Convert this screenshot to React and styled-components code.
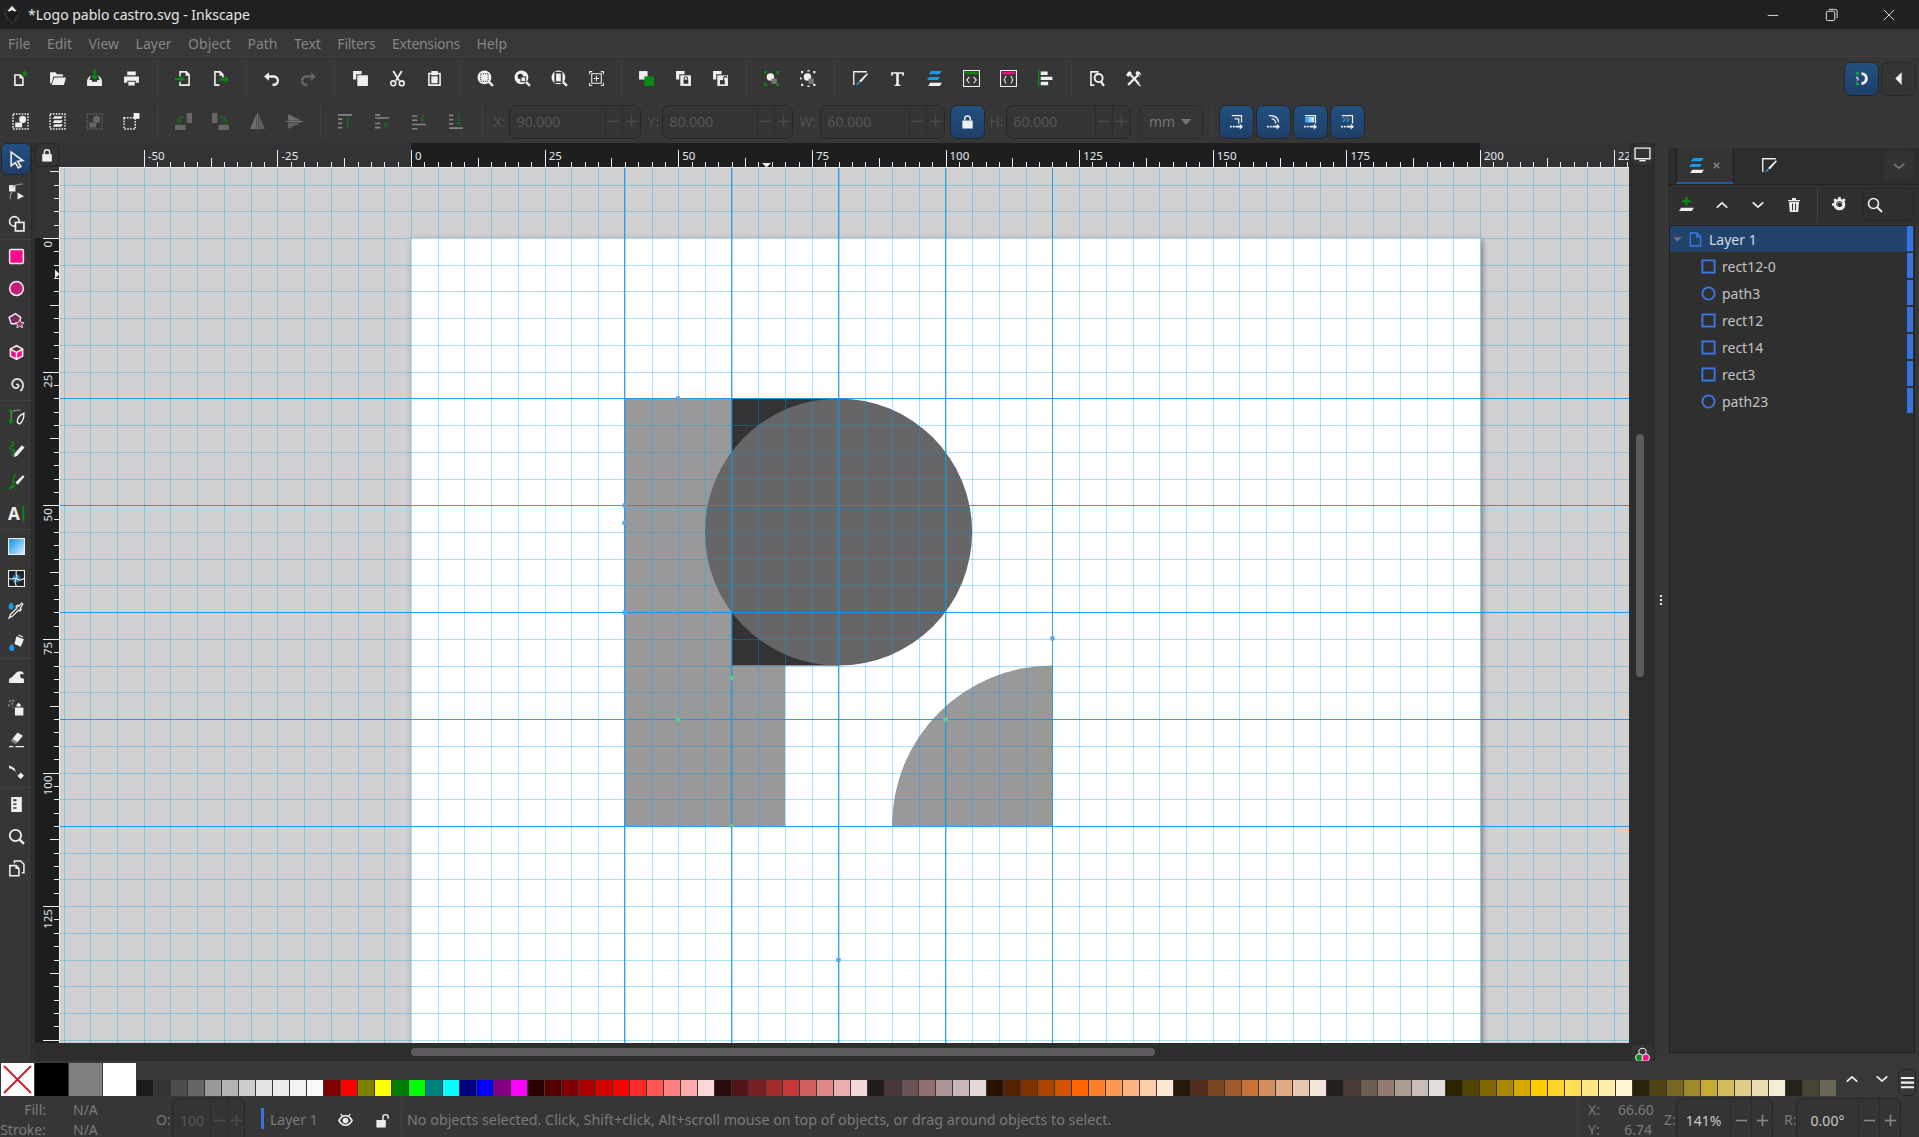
import React from "react";
import styled, { createGlobalStyle } from "styled-components";

const W = "#efefef", G = "#0a8a12", B = "#1a9be8", P = "#ff0a8c", D = "#333";

const Global = createGlobalStyle`
  html, body { margin: 0; padding: 0; background: #353535; overflow: hidden; }
  * { box-sizing: border-box; }
  #root { font-family: "Noto Sans", "Open Sans", sans-serif; }
`;

const Shell = styled.div`
  width: 1919px; height: 1137px; display: flex; flex-direction: column; overflow: hidden;
  background: #363636; color: #888; font-size: 14px;
`;
const TitleBar = styled.header`
  height: 29px; background: #202020; display: flex; align-items: center; padding: 0 1px 0 3px; color: #e6e6e6;
`;
const TitleText = styled.span`
  margin-left: 7px; font-size: 14px; white-space: nowrap; flex: 1;
`;
const WinBtn = styled.div`
  width: 58px; height: 29px; display: flex; align-items: center; justify-content: center;
`;
const MenuBar = styled.nav`
  height: 28px; background: #383838; display: flex; align-items: center; padding: 2px 0 0 8px; gap: 16.5px;
  border-bottom: 1px solid #3e3e3e;
`;
const MenuItem = styled.span`
  font-size: 14px; color: #868686; line-height: 20px; letter-spacing: ${p => p.$ls || 0}px;
`;
const ToolRow = styled.div`
  height: 43px; background: #363636; display: flex; align-items: center; padding-left: 2px;
`;
const IconBtn = styled.div`
  width: 37px; height: 34px; flex: none; display: flex; align-items: center; justify-content: center;
  opacity: ${p => p.$dim ? 0.42 : 1};
`;
const Sep = styled.div`
  width: ${p => p.$w || 14.5}px; height: 34px; flex: none; position: relative;
  &::after { content: ""; position: absolute; left: 50%; top: 0; bottom: 0; width: 1px; background: #3f3f3f; }
`;
const Label = styled.span`
  width: ${p => p.$w}px; margin-left: ${p => p.$ml || 0}px; flex: none; font-size: 14px; color: ${p => p.$c || "#505050"};
`;
const Spin = styled.div`
  width: ${p => p.$w}px; height: ${p => p.$h || 34}px; flex: none; display: flex; align-items: center;
  border: 1px solid #272727; border-radius: 7px; background: #343434; color: ${p => p.$c || "#565656"};
  font-size: 14px; margin-top: ${p => p.$mt || 0}px; overflow: hidden;
`;
const SpinValue = styled.span`
  flex: 1; padding-left: ${p => p.$pl ?? 7}px; text-align: ${p => p.$center ? "center" : "left"}; white-space: nowrap;
`;
const Step = styled.div`
  width: ${p => p.$w || 17.5}px; height: 100%; flex: none; border-left: 1px solid #2c2c2c;
  display: flex; align-items: center; justify-content: center; color: ${p => p.$c || "#4b4b4b"};
`;
const LockBtn = styled.div`
  width: ${p => p.$w || 35}px; height: 34px; margin-left: ${p => p.$ml || 0}px; flex: none; border-radius: 7px;
  border: 1px solid #272727; display: flex; align-items: center; justify-content: center;
  background: ${p => p.$on ? "linear-gradient(#22507f, #1e3f69)" : "#343434"};
`;
const UnitSel = styled.div`
  width: 64px; height: 34px; margin-left: 8px; flex: none; border: 1px solid #2b2b2b; border-radius: 7px;
  display: flex; align-items: center; justify-content: center; gap: 5px; color: #737373; font-size: 14px;
`;
const Group = styled.div`
  display: flex; gap: ${p => p.$gap || 2}px; margin-left: ${p => p.$ml || "0"}; padding-right: ${p => p.$pr || 0}px; flex: none;
`;
const Middle = styled.div`
  height: 918px; display: flex;
`;
const Toolbox = styled.aside`
  width: 35px; flex: none; background: #363636; border-right: 3px solid #303030;
  display: flex; flex-direction: column; box-shadow: inset -1px 0 0 #2a2a2a;
`;
const ToolBtn = styled.div`
  width: 32px; height: 32px; flex: none; display: flex; align-items: center; justify-content: center;
  margin-left: ${p => p.$active ? 1 : 0}px;
  ${p => p.$active && "width: 30px; border-radius: 6px; border: 1px solid #272727; background: linear-gradient(#22507f, #1e3f69);"}
`;
const ToolSep = styled.div`
  height: 1px; width: 32px; flex: none; background: #3f3f3f;
`;
const Workspace = styled.main`
  width: 1620px; flex: none; display: grid; grid-template-columns: 24px 1570px 26px; grid-template-rows: 24px 876px 18px;
  background: #2d2d2d;
`;
const Corner = styled.div`
  background: #333; border: 1px solid #272727; border-radius: 6px; display: flex; align-items: center; justify-content: center;
  width: 24px; height: 24px;
`;
const HRuler = styled.svg`
  display: block; width: 1570px; height: 24px;
`;
const VRuler = styled.svg`
  display: block; width: 24px; height: 876px;
`;
const CornerBtn = styled.div`
  width: 25px; height: 23px; margin-left: 1px; border: 1px solid #272727; border-radius: 7px; background: #333;
  display: flex; align-items: center; justify-content: center;
  grid-column: ${p => p.$col || "auto"};
`;
const CanvasWrap = styled.div`
  position: relative; width: 1570px; height: 876px; overflow: hidden; background: #d1d1d1;
  border-left: 1px solid #f2f2f2; border-top: 1px solid #e8e8e8;
`;
const Drawing = styled.svg`
  position: absolute; left: -1px; top: -1px; width: 1570px; height: 876px;
`;
const VScrollCol = styled.div`
  background: #2c2c2c; display: flex; justify-content: center; padding: 267px 0 0 0;
`;
const VThumb = styled.div`
  width: 8px; height: 243px; background: #5c5c5c; border-radius: 4px; margin-right: 4px;
`;
const HScrollRow = styled.div`
  grid-column: 1 / 3; background: #2d2d2d; padding: 5px 0 0 376px;
`;
const HThumb = styled.div`
  width: 744px; height: 8px; background: #5d5d5d; border-radius: 4px;
`;
const Handle = styled.div`
  width: 13px; flex: none; background: #373737; display: flex; flex-direction: column; gap: 2px; align-items: center; justify-content: center;
  padding-bottom: 5px; padding-right: 1px;
`;
const HandleDot = styled.i`
  width: 2px; height: 2px; background: #e8e8e8; display: block;
`;
const Panel = styled.section`
  width: 251px; flex: none; background: #373737; padding-top: 5px; display: flex; flex-direction: column;
`;
const TabBar = styled.div`
  height: 37px; background: #2d2d2d; display: flex; align-items: stretch; padding-left: 8px; border-bottom: 1px solid #222; position: relative;
`;
const Tab = styled.div`
  width: ${p => p.$w}px; display: flex; align-items: center; justify-content: ${p => p.$active ? "flex-start" : "center"}; gap: 7px;
  padding-left: ${p => p.$active ? 11 : 0}px;
  border-left: 1px solid ${p => p.$active ? "#1e1e1e" : "transparent"}; border-right: 1px solid ${p => p.$active ? "#1e1e1e" : "transparent"};
  border-bottom: 2px solid ${p => p.$active ? "#1c5aa3" : "transparent"};
  background: ${p => p.$active ? "#333" : "transparent"};
`;
const TabMenu = styled.div`
  margin-left: auto; margin-right: 5px; width: 30px; height: 30px; align-self: center; border-radius: 5px; background: #323232;
  display: flex; align-items: center; justify-content: center;
`;
const PanelTools = styled.div`
  height: 39px; background: #2f2f2f; display: flex; align-items: center;
`;
const PanelBtn = styled.div`
  width: 36px; height: 32px; flex: none; display: flex; align-items: center; justify-content: center;
`;
const SearchBox = styled.div`
  width: 52px; height: 33px; margin-left: 5px; flex: none; border: 1px solid #242424; border-radius: 7px; padding-left: 4px;
  display: flex; align-items: center;
`;
const LayerList = styled.div`
  flex: 1; margin: 1px 4px 8px 1px; background: #2f2f2f; border: 1px solid #1f1f1f; display: flex; flex-direction: column; gap: 1px;
`;
const LayerRow = styled.div`
  height: 26px; flex: none; display: flex; align-items: center; position: relative; padding-left: ${p => p.$top ? 3 : 31}px;
  background: ${p => p.$top ? "#20426b" : "transparent"}; color: ${p => p.$top ? "#d3dbe5" : "#c4c4c4"}; font-size: 14px;
`;
const RowText = styled.span`
  margin-left: ${p => p.$ml}px;
`;
const Spacer = styled.span`
  width: ${p => p.$w}px; flex: none;
`;
const RowMark = styled.i`
  position: absolute; right: 1px; top: 0; bottom: 1px; width: 6px; background: #3574e0; display: block;
`;
const Palette = styled.div`
  height: 35px; background: #383838; display: flex; align-items: flex-end; padding-left: 1px;
`;
const BigSwatch = styled.div`
  width: 33px; height: 33px; margin-right: 1px; flex: none; background: ${p => p.$c};
`;
const Swatch = styled.div`
  width: 16px; height: 16px; margin-right: 1px; flex: none; background: ${p => p.$c};
`;
const NavBtn = styled.div`
  width: 30px; height: 24px; flex: none; align-self: flex-start; margin-top: 6px; display: flex; align-items: center; justify-content: center;
`;
const MenuSquare = styled.div`
  width: 18px; height: 27px; margin-left: 1px; flex: none; border: 1px solid #262626; border-radius: 6px; display: flex; align-items: center; justify-content: center;
`;
const Status = styled.footer`
  height: 41px; background: #363636; display: flex; align-items: flex-start; overflow: hidden; color: #7b7b7b; font-size: 14px;
`;
const FillBlock = styled.div`
  width: 156px; flex: none; display: grid; grid-template-columns: 46px 54px; column-gap: 27px; line-height: 20px; padding-top: 4px;
  & > :nth-child(odd) { text-align: right; }
`;
const LayerMark = styled.i`
  width: 3px; height: 21px; margin: 12px 0 0 16px; background: #3574e0; flex: none; display: block;
`;
const StatusText = styled.span`
  margin-left: ${p => p.$ml || 0}px; line-height: 20px; margin-top: 14px; white-space: nowrap; flex: none;
  font-size: ${p => p.$fs || 14}px;
  width: ${p => p.$w ? p.$w + "px" : "auto"};
`;
const StatusIcon = styled.div`
  width: ${p => p.$w || 38}px; height: 20px; margin-top: 14px; flex: none; display: flex; align-items: center; justify-content: center;
`;
const VBar = styled.div`
  width: 1px; height: 41px; background: #3f3f3f; flex: none;
`;
const Coords = styled.div`
  width: 75px; flex: none; display: grid; grid-template-columns: 30px 34px; padding: 4px 0 0 10px; line-height: 20px;
  & > :nth-child(even) { text-align: right; }
`;
const TitleLogo = styled.svg`
  width: 18px; height: 19px; flex: none;
`;
const Ico = styled.svg.attrs({ viewBox: "0 0 16 16" })`
  width: ${p => p.$s || 17}px; height: ${p => p.$s || 17}px; display: block; flex: none; fill: ${W}; overflow: visible;
`;

const mag = (inner) => (<><circle cx="7" cy="7" r="6.5" /><path d="M11 11l4 4" stroke={W} strokeWidth="2.2" />{inner}</>);
const box = (x, y, w, h, c = W, sw = 1) => <rect x={x} y={y} width={w} height={h} fill="none" stroke={c} strokeWidth={sw} />;
const dotted = (x, y, w, h, c = W) => <rect x={x} y={y} width={w} height={h} fill="none" stroke={c} strokeWidth="1.4" strokeDasharray="1.5 1.2" />;
const arrowDash = <path d="M1 12.500h2v2H1zM4 12.500h2v2H4zM7 12.500h4.500V10.500l3.500 3-3.500 3v-2H7z" />;

const icons = {
  new: <><path fillRule="evenodd" d="M2 4h6l3 3v8H2zM3.500 5.500v8h6V8H7V5.500z" /><path fill={G} d="M12 0l1 2 2.200.3-1.600 1.500.4 2.200-2-1-2 1 .4-2.200L8.800 2.300 11 2z" /></>,
  open: <><path d="M1 2h5l1.500 2H13v2H4.200L2.600 12 1 13z" /><path d="M5 7h11l-2 7H2.500z" /></>,
  save: <><path fill={G} d="M7 0h2v5h3L8 9.500 4 5h3z" /><path fillRule="evenodd" d="M1 9.500L3 6h1.500L3 9.500h2.500V11h5V9.500H13L11.500 6H13l2 3.500V15H1z" /></>,
  print: <path d="M4 1.500h8V5H4zM1 6h14v6h-3v-2H4v2H1zM5 11h6v3.500H5z" />,
  imp: <><path fillRule="evenodd" d="M4 1h7l3 3v11H4v-4h1.500v2.500h7V5.500H10v-3H5.500V6H4z" /><path fill={G} d="M0 7.500h5V5l4 3.500L5 12V9.500H0z" /></>,
  exp: <><path fillRule="evenodd" d="M2 1h6l3 3v3H9.500V5.500H7v-3H3.500v11H7V15H2z" /><path fill={G} d="M7 8h5V5.500l4 3.500-4 3.500V10H7z" /></>,
  undo: <path d="M5.500 2L1 6l4.500 4V7.200H10c1.800 0 3 1.200 3 2.800s-1.200 2.800-3 2.800H9V15h1c3 0 5-2.200 5-5s-2-5-5-5H5.500z" />,
  redo: <path fill="#656565" d="M10.500 2L15 6l-4.500 4V7.200H6c-1.800 0-3 1.200-3 2.800s1.200 2.800 3 2.800h1V15H6c-3 0-5-2.200-5-5s2-5 5-5h4.500z" />,
  copy: <path d="M1 1h8v3H4v5H1zM5 5h10v10H5z" />,
  cut: <><path d="M4 1l5.500 9M12 1L6.500 10" stroke={W} strokeWidth="1.800" /><circle cx="4" cy="12.500" r="2.300" fill="none" stroke={W} strokeWidth="1.500" /><circle cx="12" cy="12.500" r="2.300" fill="none" stroke={W} strokeWidth="1.500" /></>,
  paste: <><path fillRule="evenodd" d="M5 1h6v1.500h3V15H2V2.500h3zM3.500 4v9.500h9V4H11v1H5V4z" /><path d="M5 6h6v6.500H5z" /></>,
  zoomSel: mag(<rect x="3.500" y="3.500" width="7" height="7" fill="none" stroke={D} strokeDasharray="1 1" />),
  zoomDraw: mag(<><circle cx="6" cy="6" r="2.500" fill={D} /><rect x="6.500" y="6.500" width="4.500" height="4.500" fill={W} stroke={D} /></>),
  zoomPage: mag(<rect x="4" y="2.500" width="6" height="9" fill="none" stroke={D} strokeWidth="1.500" />),
  zoomCenter: <><path d="M1 1h3v1H2v2H1zM12 1h3v3h-1V2h-2zM1 12h1v2h2v1H1zM14 12h1v3h-3v-1h2z" /><path d="M3.500 3.500h9v9h-9z" fill="none" stroke={W} /><path d="M7.500 5.500h1v2h2v1h-2v2h-1v-2h-2v-1h2z" /></>,
  dup: <><path d="M1 1h8v8H1z" /><path fill={G} d="M6 6h9v9H6z" /></>,
  clone: <><path d="M1 1h8v3H4v5H1z" /><path d="M5 5h10v10H5z" /><path fill={D} d="M8 9h4.500v4H8z" /><path d="M8.700 9V7.800a1.500 1.500 0 0 1 3 0V9" fill="none" stroke={D} /></>,
  unclone: <><path d="M1 1h8v3H4v5H1z" /><path d="M5 5h10v10H5z" /><path fill={D} d="M7.500 9.500H12V13.500H7.500z" /><path d="M11 9.500V7.500a1.500 1.500 0 0 1 3 0" fill="none" stroke={D} /></>,
  group: <><circle cx="7" cy="6.500" r="3.500" /><path d="M8 8h5v5H8z" fill="#777" /><path fill={G} d="M1 1h2.500v2.500H1zM12.500 1H15v2.500h-2.500zM1 12.500h2.500V15H1zM12.500 12.500H15V15h-2.500z" /></>,
  ungroup: <><circle cx="7" cy="6.500" r="3.500" /><path d="M8 8h5v5H8z" fill="#777" /><path d="M1 1h2v2H1zM12.500 1h2v2h-2zM1 13h2v2H1zM12.500 13h2v2h-2zM7 0h2v1.500H7zM7 14.500h2V16H7zM0 7h1.500v2H0z" /></>,
  fillStroke: <><path d="M1 1h13v1.300H2.300V14H1z" /><path d="M3.500 15l2-4 2 1.500z" fill={B} /><path d="M6.500 10.500L14 3l1 1-6.500 7.500z" /></>,
  text: <path d="M2 2h12v3.500h-1.200L12 3.500H9.200v10l1.500.6v.9H5.300v-.9l1.500-.6v-10H4l-.8 2H2z" />,
  layers: <><path fill={B} d="M5 1h10l-2.500 3H2.500zM3 6.500h10L11 9.500H1z" /><path d="M4 12h11l-2 3H2z" /></>,
  xml: <>{box(.5, .5, 15, 15)}<path fill={G} d="M2 2h12v2H2z" /><path d="M6 6.500L3.500 9.500 6 12.500M10 6.500l2.500 3-2.500 3" fill="none" stroke={W} /></>,
  css: <>{box(.5, .5, 15, 15)}<path fill={P} d="M2 2h12v2H2z" /><path d="M6 6c-1.500 0-1 2.800-2 3.300 1 .5.500 3.200 2 3.200M10 6c1.500 0 1 2.800 2 3.300-1 .5-.5 3.200-2 3.200" fill="none" stroke={W} /></>,
  align: <><path fill={G} d="M1 0h1.200v16H1z" /><path d="M3.500 1.500H10v3.200H3.500zM3.500 6.300h11v3.200h-11zM3.500 11.100h7v3.200h-7z" /></>,
  docProps: <><path fillRule="evenodd" d="M2 1h8v1.500H3.500v11H6V15H2z" /><circle cx="10" cy="7.500" r="3.800" fill="none" stroke={W} strokeWidth="1.800" /><path d="M12 10.500l3 4.500" stroke={W} strokeWidth="2.200" /><path d="M6.500 3.500h3V5h-3z" /></>,
  prefs: <><path d="M3 14L13 4" stroke={W} strokeWidth="2" /><path d="M3 2l10 11" stroke={W} strokeWidth="2" /><path d="M1 4.500L4.500 1l2 2L3 6.500zM11 1.200a3.500 3.500 0 0 1 4 4L13.500 3.500 12.500 4.500l1.600 1.600a3.500 3.500 0 0 1-4-4zM11.500 11l3.500 3.500-1 1L10.500 12z" /></>,
  selAll: <>{dotted(1, 1, 14, 14)}<circle cx="10" cy="6" r="3.300" /><path d="M3 9h6.500v4.500H3z" /></>,
  selLayers: <>{dotted(1, 1, 14, 14)}<path d="M5 3h8l-1.500 2.500h-8zM5 6.800h8l-1.500 2.500h-8zM5 10.600h8L11.500 13h-8z" /></>,
  desel: <>{dotted(1, 1, 14, 14, "#999")}<circle cx="10" cy="6" r="3.300" fill="#aaa" /><path d="M3 9h6.500v4.500H3z" fill="#aaa" /></>,
  handle: <>{dotted(1, 4.500, 10.500, 10.500)}<path d="M10 0h5.500v5.500H10z" /></>,
  rotCcw: <><path fill="#aaa" d="M11 0h5v9.500h-5zM0 11h10v5H0z" /><path fill={G} d="M9 2.500C5 2 3 4 2.500 6.500H0l3.500 3.500 3.500-3.500H4.800c.3-1 2-1.800 4.200-1.500z" /></>,
  rotCw: <><path fill="#aaa" d="M0 0h5v9.500H0zM6 11h10v5H6z" /><path fill={G} d="M7 2.500c4-.5 6 1.500 6.500 4H16L12.500 10 9 6.500h2.200c-.3-1-2-1.800-4.200-1.500z" /></>,
  flipH: <><path d="M7 1v14H1z" fill="#bbb" /><path d="M9 1v14h6z" fill="#999" /><path d="M7.700 0h.8v16h-.8z" /></>,
  flipV: <><path d="M2 1l12 6H2z" fill="#bbb" /><path d="M2 15l12-6H2z" fill="#999" /><path d="M0 7.700h16v.8H0z" /></>,
  top: <><path d="M1 1h13v1.500H1zM1 5h4v1.500H1zM1 9h4v1.500H1zM1 13h4v1.500H1z" /><path fill={G} d="M9 15V7H7l3-3.500L13 7h-2v8z" /></>,
  up: <><path d="M1 4h13v1.500H1zM1 1h5v1.500H1zM1 9h5v1.500H1zM1 13h5v1.500H1z" /><path fill={G} d="M10 15V11H8l3-3.500 3 3.500h-2v4z" /></>,
  down: <><path d="M1 10h13v1.500H1zM1 2h5v1.500H1zM1 6h5v1.500H1zM1 14h5v1.500H1z" /><path fill={G} d="M10 1v4H8l3 3.500L14 5h-2V1z" /></>,
  bottom: <><path d="M1 13.500h13V15H1zM1 1.500h4V3H1zM1 5.500h4V7H1zM1 9.500h4V11H1z" /><path fill={G} d="M9 1v8H7l3 3.500L13 9h-2V1z" /></>,
  lock: <><path d="M2.500 7h11v8.500h-11z" /><path d="M5 7V5a3 3 0 0 1 6 0v2" fill="none" stroke={W} strokeWidth="1.600" /></>,
  unlock: <><path d="M1.500 7.500h10v8h-10z" /><path d="M8.500 7.500V4.500a2.800 2.800 0 0 1 5.600 0V6" fill="none" stroke={W} strokeWidth="1.500" /></>,
  scale1: <><path d="M3 1h11v8h-1.300V2.300H3zM6 4.500h5V10H9.700V5.800H6z" />{arrowDash}</>,
  scale2: <><path d="M3 1c5 0 11 1 11 8h-1.300c0-5-5-6.700-9.700-6.700zM6 4.500c3 0 5 2 5 5.500H9.700c0-3-1.700-4.200-3.700-4.200z" />{arrowDash}</>,
  scale3: <><path d="M2 1h12v9h-1.300V2.300H2z" /><defs><linearGradient id="sc3"><stop offset="0" stopColor="#16a0ea" /><stop offset="1" stopColor="#dff2fd" /></linearGradient></defs><path fill="url(#sc3)" d="M2 3h10v6H2z" />{arrowDash}</>,
  scale4: <><path d="M2 1h12v9h-1.300V2.300H2z" /><path d="M3 3.500l2.500 2.500-2.500 2.500M7 3.500l2.500 2.500-2.500 2.500" fill="none" stroke="#6cc4f5" />{arrowDash}</>,
  snap: <><path d="M8 2a6 6 0 0 1 0 12v-2.800a3.200 3.200 0 0 0 0-6.400z" /><circle cx="4" cy="3" r="1.600" fill="#14a03c" /><circle cx="4" cy="13" r="1.600" fill="#14a03c" /><path d="M5 6.500H3.500V8H5v1.500H3.500" fill="none" stroke={W} strokeWidth=".8" /></>,
  back: <path d="M11 2v12L5 8z" />,
  monitor: <><path d="M1 2h14v10H1z" fill="none" stroke={W} strokeWidth="1.300" /><path d="M5 13.200h6v1.300H5z" /></>,
  color: <><circle cx="8" cy="5.500" r="3.400" fill="none" stroke={W} /><circle cx="5" cy="11" r="3.400" fill={G} stroke={W} /><circle cx="11" cy="11" r="3.400" fill={P} stroke={W} /></>,
  chevD: <path d="M2 5.500l6 5 6-5" fill="none" stroke="#777" strokeWidth="2" />,
  chevUpW: <path d="M2 11l6-5.500L14 11" fill="none" stroke={W} strokeWidth="2" />,
  chevDownW: <path d="M2 5l6 5.500L14 5" fill="none" stroke={W} strokeWidth="2" />,
  addLayer: <><path fill={G} d="M7 1h2v3h3v2H9v3H7V6H4V4h3z" /><path d="M3 11h12l-2 3H1z" /></>,
  trash: <><path d="M2 3h12v1.300H2zM6 1h4v2H6z" /><path fillRule="evenodd" d="M3 5h10l-.8 10H3.800zM6 6.500v7h1v-7zM9 6.500v7h1v-7z" /></>,
  gear: <><circle cx="8" cy="8" r="4.300" fill="none" stroke={W} strokeWidth="2.400" /><path stroke={W} strokeWidth="2.400" strokeDasharray="2.200 2.500" d="M8 1v14M1 8h14M3 3l10 10M13 3L3 13" /><circle cx="8" cy="8" r="2.200" fill="#2f2f2f" /></>,
  search: <><circle cx="6.500" cy="6.500" r="5" fill="none" stroke={W} strokeWidth="1.600" /><path d="M10 10l5 5" stroke={W} strokeWidth="2" /></>,
  eye: <><path d="M1 8c2-3.500 4-5 7-5s5 1.500 7 5c-2 3.500-4 5-7 5s-5-1.500-7-5z" fill="none" stroke={W} strokeWidth="1.700" /><circle cx="8" cy="8" r="3" /><path d="M3 1l2 3M13 1l-2 3" stroke={W} strokeWidth="1.300" /></>,
  menu: <path d="M1 2h14v2.200H1zM1 7h14v2.200H1zM1 12h14v2.200H1z" />,
  cursor: <path d="M3 1l11 8-5 .8 3.200 4.800-2.400 1.300-3-5L3 14z" fill="#1f4a78" stroke={W} strokeWidth="1.500" />,
  node: <><rect x="1" y="2" width="6" height="6" fill={W} /><path d="M4 4c4-3 7-3 10-3" fill="none" stroke="#999" /><path d="M2 15c0-3 1-6 2-7" fill="none" stroke="#999" /><path d="M9 9l6 3.500-6 3z" /></>,
  builder: <><circle cx="6" cy="6" r="4.500" fill="none" stroke={W} strokeWidth="1.600" /><rect x="7" y="7" width="8" height="8" fill="#363636" stroke={W} strokeWidth="1.600" /></>,
  rect: <rect x="1.500" y="1.500" width="13" height="13" rx="1" fill={P} stroke={W} strokeWidth="1.400" />,
  ellipse: <circle cx="8" cy="8" r="6.500" fill="#c21f7a" stroke={W} strokeWidth="1.400" />,
  star: <><path d="M7 1.500l5 3.500-1.500 6H3L1 5z" fill="#7d2a5c" stroke={W} strokeWidth="1.300" /><path d="M11 7l1.300 2.800 2.800.2-2.100 1.900.6 2.900-2.600-1.500-2.600 1.500.6-2.900L7 10l2.800-.2z" fill="#a3246a" stroke={W} strokeWidth=".8" /></>,
  cube: <><path d="M8 .8l6.500 3.400v7.600L8 15.200 1.500 11.800V4.200z" fill={W} /><path d="M8 2.500l4.500 2.300L8 7 3.500 4.800z" fill="#54283f" /><path d="M3 6l4.300 2.200v5L3 11z" fill={P} /><path d="M13 6L8.700 8.200v5L13 11z" fill={P} /></>,
  spiral: <path d="M8 8.500c.5-1 2-.5 2 1s-2 2.500-4 1.500S3 7 5 4.500 11 2.500 13 5s1.500 7-1.500 9" fill="none" stroke="#ddd" strokeWidth="1.800" />,
  pen: <><path d="M9 13c-1-3 1-7 6-9 0 5-1 8-4 10z" fill="none" stroke={W} strokeWidth="1.300" /><path d="M3 3c3-2 6-2 9-2" fill="none" stroke="#999" /><path d="M3 3v8" stroke="#888" /><circle cx="2.500" cy="2" r="1.800" fill={G} /><rect x="1" y="10" width="3.500" height="3.500" fill={G} /></>,
  pencil: <><path d="M6 12l7-8 2.500 2-7 8-3 1z" /><path d="M3 1c3 0 2.500 3 .5 4s-2 3 .5 3 3 2-.5 6" fill="none" stroke={G} strokeWidth="1.500" /></>,
  calli: <><path d="M7 9l7-7 1.500 1.500-6.500 7.500z" /><path d="M6 1C8 3 4 5 5 8s-2 5-4 7l6-3" fill="none" stroke={G} strokeWidth="1.500" /></>,
  textTool: <><text x="0" y="14" fontSize="16" fontWeight="700" fontFamily="Noto Sans" fill={W}>A</text><path fill={G} d="M13.500 1h1.800v14h-1.800z" /></>,
  gradient: <><defs><linearGradient id="gr" x1="0" y1="0" x2="1" y2="1"><stop offset="0" stopColor="#0a8fe8" /><stop offset="1" stopColor="#d8eefc" /></linearGradient></defs><rect x=".5" y=".5" width="15" height="15" fill="url(#gr)" stroke={W} /></>,
  mesh: <><rect x=".5" y=".5" width="15" height="15" fill="#222" stroke={W} /><circle cx="8" cy="8" r="4" fill={B} opacity=".7" /><path d="M8 1c-2 3 2 5 0 7s-2 4 0 7M1 8c3 2 5-2 7 0s4 2 7 0" fill="none" stroke={W} /></>,
  dropper: <><path d="M14 2l-1-1-3 3-1-1-1.500 1.500 1 1-6 6L1 15l3-1.500 6-6 1 1L12.500 7l-1-1z" fill="none" stroke={W} strokeWidth="1.200" /><path d="M3 0c1.500 2 2.500 3 2.500 4.500a2.500 2.500 0 0 1-5 0C.5 3 1.500 2 3 0z" fill={B} /></>,
  bucket: <><path d="M8 2l7 3-3 7-6-2.500z" fill={W} /><path d="M10 1l4 1.800" stroke={W} /><path d="M3.500 9c1.500 2 2.500 3 2.500 4.500a2.500 2.500 0 0 1-5 0C1 12 2 11 3.500 9z" fill={B} /></>,
  tweak: <path d="M1 15v-4c3-1 4-3 6-5s5-3 7-1c1 1 1 2 0 2-2-1-3 0-2.500 2 .5 2 2 2 3.500 2v4z" />,
  spray: <><path d="M8 5.500l2-2 2 2v1.500H8zM6.500 8h8v7.500h-8z" /><path fill="#777" d="M1 1h2v2H1zM4 .5h2v2H4zM3 3.500h2v2H3zM0 5h2v2H0zM4 7h1.500v1.500H4z" /></>,
  eraser: <><path d="M9 1.500l5 3-5 6-5-3z" /><path fill="#888" d="M4 7.500l5 3-1.500 2-5-3z" /><path d="M1 14h4v1.300H1zM7 14h8v1.300H7z" /></>,
  connector: <path d="M1 2l5 3 3 7 3-3 3 3-3 3-2.500-2L7 8 3 5.500 1 5z" />,
  page: <path fillRule="evenodd" d="M3 1h10v14H3zM5 3v2h3V3zM5 7v1.500h3V7zM5 10.500V12h3v-1.500z" />,
  zoom: <><circle cx="7" cy="7" r="5.300" fill="none" stroke={W} strokeWidth="1.700" /><path d="M11 11l4 4" stroke={W} strokeWidth="2.200" /></>,
  pages: <><path d="M6 3V1h6l3 3v8h-2" fill="none" stroke={W} strokeWidth="1.400" /><path fillRule="evenodd" d="M1 4.500h7l3 3V15.500H1zM2.500 6v8h7V8.500H7V6z" /></>,
  layerDoc: <path d="M2.500 1h7l4 4v10h-11zM9.500 1v4h4" fill="none" stroke="#3b78e7" strokeWidth="1.500" />,
  rectBlue: <rect x="1.500" y="1.500" width="13" height="13" fill="none" stroke="#3b78e7" strokeWidth="2" />,
  circBlue: <circle cx="8" cy="8" r="6.500" fill="none" stroke="#3b78e7" strokeWidth="2" />,
  triDown: <path d="M1 4h14l-7 8z" fill="#757575" />,
  tabClose: <path d="M3 3l10 10M13 3L3 13" stroke="#8d8d8d" strokeWidth="2.500" fill="none" />,
  winMin: <path d="M2 8.500h12" stroke="#eee" strokeWidth="1" fill="none" />,
  winMax: <><rect x="2.500" y="4.500" width="9" height="10" rx="1.500" fill="none" stroke="#eee" /><path d="M5 2.500h7a2 2 0 0 1 2 2V12" fill="none" stroke="#eee" /></>,
  winClose: <path d="M2 2l12 12M14 2L2 14" stroke="#eee" strokeWidth="1" fill="none" />,
  minus: <path d="M1 8h14" stroke="currentColor" strokeWidth="2" fill="none" />,
  plus: <path d="M1 8h14M8 1v14" stroke="currentColor" strokeWidth="2" fill="none" />,
};

const Icon = ({ n, s }) => <Ico $s={s}>{icons[n]}</Ico>;

const row1 = [["new", "open", "save", "print"], ["imp", "exp"], ["undo", "redo"], ["copy", "cut", "paste"], ["zoomSel", "zoomDraw", "zoomPage", "zoomCenter"], ["dup", "clone", "unclone"], ["group", "ungroup"], ["fillStroke", "text", "layers", "xml", "css", "align"], ["docProps", "prefs"]];
const tools = [["cursor", "node", "builder"], ["rect", "ellipse", "star", "cube", "spiral"], ["pen", "pencil", "calli", "textTool"], ["gradient", "mesh", "dropper", "bucket"], ["tweak", "spray", "eraser", "connector"], ["page", "zoom", "pages"]];
const menus = [["File"], ["Edit"], ["View"], ["Layer"], ["Object"], ["Path"], ["Text"], ["Filters", -0.25], ["Extensions", -0.3], ["Help"]];
const layers = [["rect12-0", "rectBlue"], ["path3", "circBlue"], ["rect12", "rectBlue"], ["rect14", "rectBlue"], ["rect3", "rectBlue"], ["path23", "circBlue"]];
const swatches = "#1a1a1a #333333 #4d4d4d #666666 #999999 #b3b3b3 #cccccc #e6e6e6 #ececec #f2f2f2 #f9f9f9 #800000 #ff0000 #808000 #ffff00 #008000 #00ff00 #008080 #00ffff #000080 #0000ff #800080 #ff00ff #2b0000 #550000 #800000 #aa0000 #d40000 #ff0000 #ff2a2a #ff5555 #ff8080 #ffaaaa #ffd5d5 #280b0b #501616 #782121 #a02c2c #c83737 #d35f5f #de8787 #e9afaf #f4d7d7 #241c1c #483737 #6c5353 #916f6f #ac9393 #c8b7b7 #e3dbdb #2b1100 #552200 #803300 #aa4400 #d45500 #ff6600 #ff7f2a #ff9955 #ffb380 #ffccaa #ffe6d5 #28170b #502d16 #784421 #a05a2c #c87137 #d38d5f #deaa87 #e9c6af #f4e3d7 #241f1c #483e37 #6c5d53 #917c6f #ac9d93 #c8beb7 #e3dedb #2b2200 #554400 #806600 #aa8800 #d4aa00 #ffcc00 #ffd42a #ffdd55 #ffe680 #ffeeaa #fff6d5 #28220b #504416 #786721 #a0892c #c8ab37 #d3bc5f #decd87 #e9ddaf #f4eed7 #24221c #484537 #6c6753".split(" ");

const K = 5.345, X0 = 411, Y0 = 238;
const range = (a, b) => Array.from({ length: b - a + 1 }, (_, i) => a + i);

function HorizontalRuler() {
  const ticks = range(-20, 92);
  return (
    <HRuler viewBox="59 143 1570 24">
      <rect x="59" y="143" width="1570" height="24" fill="#333" />
      <rect x={X0} y="143" width="1069" height="24" fill="#1d1f1f" />
      {ticks.map(i => {
        const x = Math.round(X0 + i * 2.5 * K) + .5;
        const big = i % 10 === 0, med = i % 5 === 0;
        return <line key={i} x1={x} x2={x} y1={big ? 150 : med ? 158 : 162} y2="167" stroke="#eee" />;
      })}
      {range(-2, 9).map(i => (
        <text key={i} x={X0 + i * 25 * K + 4} y="160" fontSize="11.5" fill="#e4e8ee" fontFamily="Noto Sans">{i * 25}</text>
      ))}
      <path d="M762 163h9l-4.500 4.500z" fill="#eee" />
    </HRuler>
  );
}
function VerticalRuler() {
  const ticks = range(-6, 64);
  return (
    <VRuler viewBox="35 167 24 876">
      <rect x="35" y="167" width="24" height="876" fill="#1d1f1f" />
      <rect x="35" y="167" width="24" height={Y0 - 167} fill="#333" />
      {ticks.map(i => {
        const y = Math.round(Y0 + i * 2.5 * K) + .5;
        const big = i % 10 === 0, med = i % 5 === 0;
        return <line key={i} y1={y} y2={y} x1={big ? 43 : med ? 50 : 54} x2="59" stroke="#eee" />;
      })}
      {range(0, 6).map(i => {
        const y = Y0 + i * 25 * K + 3;
        return <text key={i} x="52" y={y} fontSize="11.5" fill="#e4e8ee" fontFamily="Noto Sans" textAnchor="end" transform={`rotate(-90 52 ${y})`}>{i * 25}</text>;
      })}
      <path d="M55 269.500v9l4.500-4.500z" fill="#eee" />
    </VRuler>
  );
}
function CanvasDrawing() {
  const gx = range(-13, 46).map(i => Math.round(X0 + i * 5 * K) + .5);
  const gy = range(-3, 32).map(i => Math.round(Y0 + i * 5 * K) + .5);
  const gux = [624.5, 731.5, 838.5, 945.5, 1052.5];
  const guy = [398.5, 505.5, 612.5, 719.5, 826.5];
  const blue = [[678, 398.5], [624.5, 505.5], [624.5, 523], [624.5, 612.5], [1052.5, 638.5], [838.5, 960]];
  const green = [[731.5, 678], [678, 719.5], [731.5, 826], [945.5, 719.5]];
  return (
    <Drawing viewBox="59 167 1570 876">
      <defs>
        <filter id="pg" x="-5%" y="-5%" width="110%" height="110%">
          <feDropShadow dx="2" dy="2" stdDeviation="3" floodColor="#000" floodOpacity=".45" />
        </filter>
      </defs>
      <rect x={X0} y={Y0} width="1069.5" height="900" fill="#fff" filter="url(#pg)" />
      <path d="M624.5 398.500h107v267h53.500v160.500H624.5z" fill="#999" />
      <rect x="731.5" y="398.500" width="107" height="267" fill="#333" />
      <circle cx="838.500" cy="532" r="133.600" fill="#666" />
      <path d="M892 826a160.500 160.500 0 0 1 160.500-160.500V826z" fill="#999" />
      <g shapeRendering="crispEdges">
        {gx.map(x => <line key={x} x1={x} x2={x} y1="167" y2="1043" stroke="#00a0ea" strokeOpacity=".33" />)}
        {gy.map(y => <line key={y} y1={y} y2={y} x1="59" x2="1629" stroke="#00a0ea" strokeOpacity=".33" />)}
        {gux.map(x => <line key={x} x1={x} x2={x} y1="167" y2="1043" stroke="#1f8fe0" strokeOpacity=".85" />)}
        {guy.map(y => <line key={y} y1={y} y2={y} x1="59" x2="1629" stroke="#1f8fe0" strokeOpacity=".85" />)}
      </g>
      {blue.map(([x, y]) => <circle key={`${x}${y}`} cx={x} cy={y} r="2.400" fill="#5aa6ec" />)}
      {green.map(([x, y]) => <circle key={`${x}${y}`} cx={x} cy={y} r="2.400" fill="#5fc89a" />)}
    </Drawing>
  );
}

const SpinField = ({ w, value, c, stepC, stepW, center, pl, h, mt }) => (
  <Spin $w={w} $c={c} $h={h} $mt={mt}>
    <SpinValue $center={center} $pl={pl}>{value}</SpinValue>
    <Step $w={stepW} $c={stepC}><Icon n="minus" s={13} /></Step>
    <Step $w={stepW} $c={stepC}><Icon n="plus" s={13} /></Step>
  </Spin>
);

export default function App() {
  return (
    <Shell>
      <Global />
      <TitleBar>
        <TitleLogo viewBox="0 0 18 19">
          <path d="M9 0L1 8l3 1-2 2 3 1-1 2 3 1 2 4 2-3 2-1-1-2 3-1-1-2 3-2z" fill="#1a1a1a" stroke="#555" strokeWidth=".5" />
          <path d="M9 1L4.500 6l2 .5L9 5l2.500 1.500 2-.5z" fill="#eee" />
        </TitleLogo>
        <TitleText>*Logo pablo castro.svg - Inkscape</TitleText>
        <WinBtn><Icon n="winMin" s={14} /></WinBtn>
        <WinBtn><Icon n="winMax" s={15} /></WinBtn>
        <WinBtn><Icon n="winClose" s={14} /></WinBtn>
      </TitleBar>
      <MenuBar>{menus.map(([m, ls]) => <MenuItem key={m} $ls={ls}>{m}</MenuItem>)}</MenuBar>
      <ToolRow>
        {row1.map((g, i) => (
          <React.Fragment key={i}>
            {i > 0 && <Sep $w={i === 5 ? 12.5 : undefined} />}
            {g.map(n => <IconBtn key={n}><Icon n={n} /></IconBtn>)}
          </React.Fragment>
        ))}
        <Group $ml="auto" $pr={3}>
          <LockBtn $on><Icon n="snap" /></LockBtn>
          <LockBtn><Icon n="back" /></LockBtn>
        </Group>
      </ToolRow>
      <ToolRow>
        {["selAll", "selLayers"].map(n => <IconBtn key={n}><Icon n={n} /></IconBtn>)}
        <IconBtn $dim><Icon n="desel" /></IconBtn>
        <IconBtn><Icon n="handle" /></IconBtn>
        <Sep />
        {["rotCcw", "rotCw", "flipH", "flipV"].map(n => <IconBtn key={n} $dim><Icon n={n} /></IconBtn>)}
        <Sep />
        {["top", "up", "down", "bottom"].map(n => <IconBtn key={n} $dim><Icon n={n} /></IconBtn>)}
        <Sep />
        <Label $w={15} $ml={4}>X:</Label>
        <SpinField w={132} value="90.000" />
        <Label $w={14} $ml={7}>Y:</Label>
        <SpinField w={131} value="80.000" />
        <Label $w={20} $ml={7}>W:</Label>
        <SpinField w={125} value="60.000" />
        <LockBtn $on $ml={5}><Icon n="lock" s={15} /></LockBtn>
        <Label $w={16} $ml={5}>H:</Label>
        <SpinField w={125} value="60.000" />
        <UnitSel>mm<Icon n="triDown" s={12} /></UnitSel>
        <Sep $w={16} />
        <Group>
          {["scale1", "scale2", "scale3", "scale4"].map(n => <LockBtn key={n} $on><Icon n={n} s={15} /></LockBtn>)}
        </Group>
      </ToolRow>
      <Middle>
        <Toolbox>
          {tools.map((g, i) => (
            <React.Fragment key={i}>
              {i > 0 && <ToolSep />}
              {g.map(n => <ToolBtn key={n} $active={n === "cursor"}><Icon n={n} /></ToolBtn>)}
            </React.Fragment>
          ))}
        </Toolbox>
        <Workspace>
          <Corner><Icon n="lock" s={14} /></Corner>
          <HorizontalRuler />
          <CornerBtn><Icon n="monitor" s={17} /></CornerBtn>
          <VerticalRuler />
          <CanvasWrap><CanvasDrawing /></CanvasWrap>
          <VScrollCol><VThumb /></VScrollCol>
          <HScrollRow><HThumb /></HScrollRow>
          <CornerBtn><Icon n="color" s={17} /></CornerBtn>
        </Workspace>
        <Handle><HandleDot /><HandleDot /><HandleDot /></Handle>
        <Panel>
          <TabBar>
            <Tab $w={58} $active><Icon n="layers" /><Icon n="tabClose" s={9} /></Tab>
            <Tab $w={70}><Icon n="fillStroke" /></Tab>
            <TabMenu><Icon n="chevD" s={14} /></TabMenu>
          </TabBar>
          <PanelTools>
            <PanelBtn><Icon n="addLayer" /></PanelBtn>
            <PanelBtn><Icon n="chevUpW" s={14} /></PanelBtn>
            <PanelBtn><Icon n="chevDownW" s={14} /></PanelBtn>
            <PanelBtn><Icon n="trash" s={16} /></PanelBtn>
            <Sep $w={9} />
            <PanelBtn><Icon n="gear" s={17} /></PanelBtn>
            <SearchBox><Icon n="search" s={16} /></SearchBox>
          </PanelTools>
          <LayerList>
            <LayerRow $top>
              <Icon n="triDown" s={9} />
              <Spacer $w={6} />
              <Icon n="layerDoc" s={15} />
              <RowText $ml={6}>Layer 1</RowText>
              <RowMark />
            </LayerRow>
            {layers.map(([t, ic]) => (
              <LayerRow key={t}>
                <Icon n={ic} s={15} />
                <RowText $ml={6}>{t}</RowText>
                <RowMark />
              </LayerRow>
            ))}
          </LayerList>
        </Panel>
      </Middle>
      <Palette>
        <BigSwatch $c="#fff">
          <svg viewBox="0 0 33 33" width="33" height="33"><path d="M3 3l27 27M30 3L3 30" stroke="#c8232c" strokeWidth="2" fill="none" /></svg>
        </BigSwatch>
        <BigSwatch $c="#000" />
        <BigSwatch $c="#808080" />
        <BigSwatch $c="#fff" />
        {swatches.map((c, i) => <Swatch key={i} $c={c} />)}
        <NavBtn><Icon n="chevUpW" s={14} /></NavBtn>
        <NavBtn><Icon n="chevDownW" s={14} /></NavBtn>
        <MenuSquare><Icon n="menu" s={15} /></MenuSquare>
      </Palette>
      <Status>
        <FillBlock>
          <span>Fill:</span><span>N/A</span>
          <span>Stroke:</span><span>N/A</span>
        </FillBlock>
        <StatusText $w={16}>O:</StatusText>
        <SpinField w={73} value="100" h={44} mt={2} stepW={17} />
        <LayerMark />
        <StatusText $ml={6} $w={56}>Layer 1</StatusText>
        <StatusIcon><Icon n="eye" s={15} /></StatusIcon>
        <StatusIcon $w={37}><Icon n="unlock" s={15} /></StatusIcon>
        <VBar />
        <StatusText $ml={5} $w={1170} $fs={14.3}>No objects selected. Click, Shift+click, Alt+scroll mouse on top of objects, or drag around objects to select.</StatusText>
        <VBar />
        <Coords>
          <span>X:</span><span>66.60</span>
          <span>Y:</span><span>6.74</span>
        </Coords>
        <StatusText $w={12} $ml={11}>Z:</StatusText>
        <SpinField w={97} value="141%" c="#c8c8c8" stepC="#8a8a8a" stepW={21} center pl={0} h={44} mt={2} />
        <StatusText $w={12} $ml={11}>R:</StatusText>
        <SpinField w={105} value="0.00°" c="#c8c8c8" stepC="#8a8a8a" stepW={21} center pl={0} h={44} mt={2} />
      </Status>
    </Shell>
  );
}
